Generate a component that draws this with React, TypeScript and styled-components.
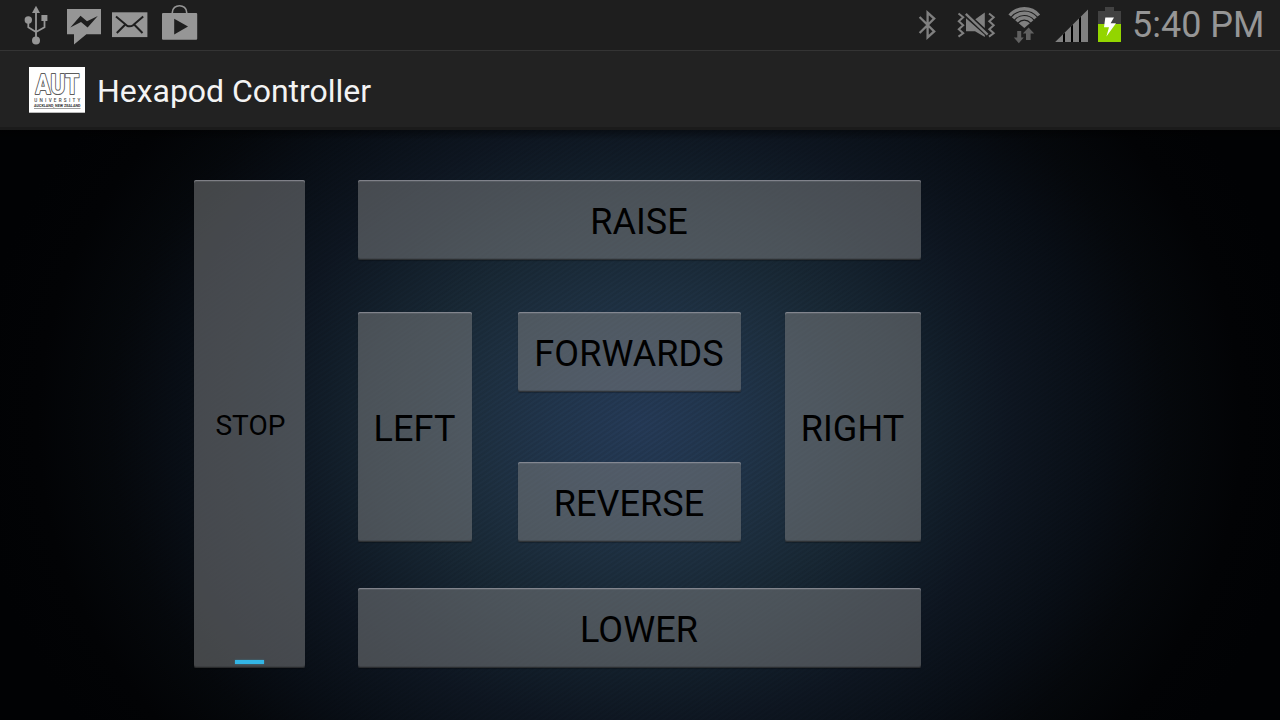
import React from 'react';
import styled, { createGlobalStyle } from 'styled-components';

const GlobalStyle = createGlobalStyle`
  * { box-sizing: border-box; }
  body { margin: 0; background: #000; font-family: Roboto, "Liberation Sans", sans-serif; overflow: hidden; }
`;

const Screen = styled.div`
  width: 1280px;
  height: 720px;
  display: flex;
  flex-direction: column;
`;

const StatusBar = styled.header`
  height: 50px;
  background: #1e1e1e;
  color: #969696;
  display: flex;
  justify-content: space-between;
`;

const StatusIcons = styled.svg`
  display: block;
  height: 50px;
  flex: none;
`;

const StatusRight = styled.div`
  display: flex;
  width: 380px;
`;

const Clock = styled.time`
  font-size: 36px;
  line-height: 50px;
  padding-left: 2px;
  white-space: nowrap;
`;

const ActionBar = styled.div`
  height: 80px;
  background: #222;
  border-top: 1px solid #343434;
  border-bottom: 3px solid #1b1b1b;
  display: flex;
  align-items: center;
  padding: 1px 0 0 29px;
  gap: 12px;
`;

const LogoArt = styled.svg`
  display: block;
  overflow: visible;
`;

const Title = styled.h1`
  margin: 0;
  padding-top: 2px;
  font-size: 32px;
  line-height: 40px;
  font-weight: 400;
  letter-spacing: -0.04px;
  color: #f3f3f3;
  white-space: nowrap;
`;

const Pad = styled.main`
  flex: 1;
  display: flex;
  gap: 53px;
  padding: 50px 359px 52px 194px;
  background:
    linear-gradient(rgba(0, 0, 0, 0.4), rgba(0, 0, 0, 0) 10px),
    repeating-linear-gradient(146deg, rgba(0, 0, 0, 0.07) 0 1.6px, rgba(0, 0, 0, 0) 2.4px 3.4px, rgba(0, 0, 0, 0.07) 4.2px),
    radial-gradient(ellipse 670px 545px at 640px 295px, #263b58 0, #22374f 12%, #1e3041 25%, #192936 35%, #121e2a 47%, #0e1621 56%, #090f17 68%, #05080c 79%, #020305 90%, #010204 100%);
`;

const Column = styled.div<{ $width: number }>`
  width: ${(p) => p.$width}px;
  display: flex;
  flex-direction: column;
  justify-content: space-between;
`;

const Middle = styled.div`
  height: 230px;
  margin-top: 6px;
  display: grid;
  grid-template-columns: 114px 223px 136px;
  column-gap: 46px;
`;

const PadButton = styled.button<{ $tall?: boolean; $small?: boolean }>`
  width: 100%;
  height: ${(p) => (p.$tall ? '100%' : '80px')};
  flex: none;
  display: flex;
  align-items: center;
  justify-content: center;
  padding: ${(p) => (p.$small ? '4px 0 0 2px' : '4px 1px 0 0')};
  border: 0;
  border-radius: 2px;
  background: rgba(122, 124, 125, 0.54);
  box-shadow: inset 0 1px 0 rgba(170, 170, 180, 0.5), inset 0 2px 0 rgba(170, 170, 180, 0.14),
    inset 0 -1px 0 rgba(20, 20, 20, 0.45), inset 0 -2px 0 rgba(20, 20, 20, 0.15), 0 1px 1px rgba(0, 0, 0, 0.25);
  color: #000;
  font-family: inherit;
  font-size: ${(p) => (p.$small ? 28 : 36)}px;
  letter-spacing: 0.08px;
  line-height: 1.17;
  white-space: nowrap;
`;

const RightSlot = styled.div`
  margin-left: -2px;
  width: 136px;
`;

const ToggleWrap = styled.div`
  position: relative;
  width: 111px;
`;

const Indicator = styled.span`
  position: absolute;
  left: 41px;
  bottom: 4px;
  width: 29px;
  height: 4px;
  background: #33b5e5;
  box-shadow: 0 0 2px rgba(51, 181, 229, 0.5);
`;

const NotificationIcons = () => (
  <StatusIcons width="220" viewBox="0 0 220 50" fill="#969696">
    <g stroke="#969696" strokeWidth="1.8" fill="none">
      <path d="M36 12V38M28.3 20V27.2L36 32M44.5 18V27.2L36 32" />
    </g>
    <path d="M36 5.8L40 13H32Z" />
    <circle cx="28.3" cy="20" r="3.7" />
    <rect x="41.4" y="15" width="6" height="6" />
    <circle cx="36" cy="40.5" r="4" />
    <path d="M67 9H101V34.2H86.4L74 44.4V34.2H67Z" />
    <path fill="#1e1e1e" d="M70.3 27.4L80.5 15.8L87 21.2L97.8 16L87.6 27.6L81 22Z" />
    <rect x="112" y="12.3" width="35.4" height="24.8" />
    <path d="M116 16.5L126.5 25.3Q129.7 27.3 133 25.3L143.2 16.5M124.8 25L116.8 33M134.6 25L142.5 33" stroke="#1e1e1e" strokeWidth="2" fill="none" />
    <rect x="162" y="13" width="35.2" height="26.8" rx="1" />
    <path d="M172.3 14V12.6C172.3 3.4 186.7 3.4 186.7 12.6V14" fill="none" stroke="#969696" strokeWidth="1.6" />
    <path fill="#1e1e1e" d="M174.2 18.8L188 26.5L174.2 34.4Z" />
  </StatusIcons>
);

const SystemIcons = () => (
  <StatusIcons width="230" viewBox="900 0 230 50">
    <path d="M919.6 17L934.2 31.4L927.6 37.4V12.6L934.2 18.6L919.6 33" fill="none" stroke="#808080" strokeWidth="2.3" />
    <g fill="none" stroke="#808080" strokeWidth="2">
      <path d="M958.5 13.5L963.2 17.2L958.8 21.2L963.2 25.2L958.8 29.2L963.2 33.2L958.5 36.6" />
      <path d="M989 13.5L993.7 17.2L989.3 21.2L993.7 25.2L989.3 29.2L993.7 33.2L989 36.6" />
    </g>
    <path fill="#808080" d="M975.3 19.2L984.8 12.4V28ZM966 18.2L984.8 35V37L975 31.2H966Z" />
    <path stroke="#808080" strokeWidth="2.4" d="M965.8 13.8L987.6 34.6" />
    <g fill="none" stroke="#808080" strokeWidth="3.4">
      <path d="M1009.7 15.5A19.2 19.2 0 0 1 1038.9 15.5" />
      <path d="M1013.1 18.4A14.7 14.7 0 0 1 1035.5 18.4" />
      <path d="M1016.5 21.3A10.3 10.3 0 0 1 1032.1 21.3" />
    </g>
    <path fill="#808080" d="M1024.3 28L1018.7 23.2A7.4 7.4 0 0 1 1029.9 23.2Z" />
    <path fill="#606060" d="M1017.2 31H1021.2V37.4H1023.8L1018.8 43.2L1013.8 37.4H1017.2Z" />
    <path fill="#606060" d="M1026 40V33.4H1022.8L1028.6 27.6L1034.2 33.4H1030.6V40Z" />
    <path fill="#808080" d="M1055.2 42L1088 9.4V42Z" />
    <path fill="#000" d="M1063 34.4L1065 32.4V42H1063ZM1071 26.4L1073 24.4V42H1071ZM1079 18.4L1081 16.4V42H1079Z" />
    <path fill="#424242" d="M1098 11H1105V7H1114V11H1121V24H1098Z" />
    <rect x="1098" y="24" width="23" height="18" fill="#93d500" />
    <path fill="#fff" d="M1105.3 17.6H1114L1110.6 23.2H1116L1106.4 36.6L1109 27.2H1104Z" />
  </StatusIcons>
);

const Logo = () => (
  <LogoArt width="56" height="46" viewBox="0 0 56 46" fontFamily="Roboto, sans-serif">
    <rect width="56" height="46" fill="#fff" />
    <text x="6.6" y="26.8" fontSize="28.5" fontWeight="700" textLength="43.4" lengthAdjust="spacingAndGlyphs" fill="#fff" stroke="#5c5c5c" strokeWidth="2.2" paintOrder="stroke" strokeLinejoin="round">AUT</text>
    <text x="5.3" y="34.8" fontSize="4.6" fontWeight="500" textLength="46" fill="#444">UNIVERSITY</text>
    <text x="5" y="39.7" fontSize="3.1" fontWeight="700" textLength="46.5" lengthAdjust="spacingAndGlyphs" fill="#333">AUCKLAND, NEW ZEALAND</text>
    <path d="M5 41.5H51.5" stroke="#888" strokeWidth="0.8" />
    <path d="M0 45.5H56" stroke="#bbb" />
  </LogoArt>
);

export default function App() {
  return (
    <Screen>
      <GlobalStyle />
      <StatusBar>
        <NotificationIcons />
        <StatusRight>
          <SystemIcons />
          <Clock>5:40 PM</Clock>
        </StatusRight>
      </StatusBar>
      <ActionBar>
        <Logo />
        <Title>Hexapod Controller</Title>
      </ActionBar>
      <Pad>
        <ToggleWrap>
          <PadButton $tall $small>STOP</PadButton>
          <Indicator />
        </ToggleWrap>
        <Column $width={563}>
          <PadButton>RAISE</PadButton>
          <Middle>
            <PadButton $tall>LEFT</PadButton>
            <Column $width={223}>
              <PadButton>FORWARDS</PadButton>
              <PadButton>REVERSE</PadButton>
            </Column>
            <RightSlot>
              <PadButton $tall>RIGHT</PadButton>
            </RightSlot>
          </Middle>
          <PadButton>LOWER</PadButton>
        </Column>
      </Pad>
    </Screen>
  );
}
